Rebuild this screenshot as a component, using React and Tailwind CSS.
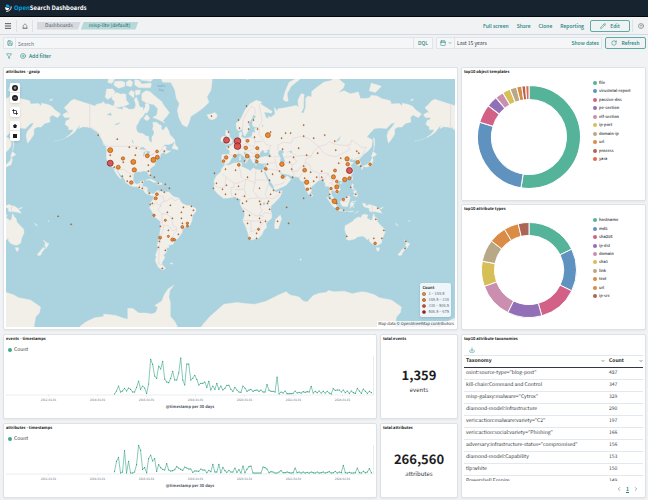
import React from 'react';
import {
    Calendar, ChevronDown, ChevronLeft, ChevronRight, CircleHelp, CirclePlus,
    Crop, Download, Filter, Menu, Pencil, RotateCw, Save,
} from 'lucide-react';

// [lon, lat] outlines, flattened in pairs
const LAND = [
    // North America
    [-168, 65.6, -164, 66.6, -162, 66.1, -163.5, 67.2, -166.5, 68.4, -163, 69.5, -160, 70.7, -156.7, 71.3, -152, 70.8, -146, 70.1, -141, 69.6, -136, 69, -134, 69.6, -129, 70, -127.5, 70.5, -125, 69.6, -123, 69.8, -119, 69.2, -115, 68.7, -114, 68.2, -110, 67.9, -108, 67.5, -108, 68.5, -105, 68.5, -102, 67.8, -98, 67.8, -96, 68.2, -95, 69.5, -96.5, 71.2, -94.5, 72, -92, 70, -92, 69.5, -90.5, 68.5, -88, 68.5, -87.5, 67.2, -85.5, 68.7, -85.5, 69.8, -82, 69.7, -81.5, 68.5, -82, 67.5, -84, 66.3, -86, 66.4, -87, 65.4, -91, 63.6, -92.5, 62, -94.5, 60.5, -94.5, 58.8, -92.5, 57, -88, 56.6, -85, 55.3, -82.3, 55.1, -82, 53, -80, 51.3, -78.8, 52.2, -79, 54.5, -76.7, 56.5, -77, 58, -78.3, 59, -77.5, 60.5, -78, 62.4, -74, 62.3, -71.5, 61.2, -69.5, 60.8, -69.5, 59, -67.5, 58.4, -65.5, 59.8, -64.5, 60.3, -62, 58, -61, 56, -59, 55, -57.5, 54, -56, 53, -56, 52, -59, 50.8, -62, 50.2, -66, 50.2, -68.5, 48.7, -70, 47.3, -67, 49, -64.5, 48.8, -65, 47.5, -64.5, 46.2, -61, 45.8, -60, 46, -61.5, 45.3, -65.5, 43.5, -66, 44.5, -64.8, 45.6, -67, 45, -70, 43.8, -70.7, 42.2, -70, 41.7, -73.5, 41, -74, 40, -75.5, 37.5, -76, 36.5, -76, 35, -78, 34, -80.8, 32.2, -81.4, 30.5, -80.2, 27, -80.5, 25.2, -81.8, 26, -82.7, 28, -84, 30, -86, 30.3, -89.5, 30.2, -89.3, 29.2, -91.5, 29.5, -94.7, 29.5, -97.2, 27.5, -97.5, 24.5, -97.5, 21.5, -96, 19, -94.3, 18.2, -92, 18.6, -90.6, 19.5, -90.3, 21, -87, 21.5, -87.5, 19.5, -88.2, 18, -88.8, 15.9, -86, 15.9, -83.3, 15, -83.7, 12, -83.5, 10.8, -82, 9.1, -79.5, 9.5, -77.3, 8.6, -78, 7.3, -80.2, 7.3, -81, 8, -83.5, 8.5, -85.7, 10, -87.5, 12.8, -91, 14, -94, 16.1, -96.5, 15.7, -99.8, 16.7, -102, 17.9, -105.5, 20, -105.4, 21.5, -107, 24, -109.3, 26, -112, 29, -113, 31.2, -114.7, 31.7, -112.8, 28.4, -111, 25.7, -109.5, 23.2, -110.3, 23.3, -112, 25, -114, 27.2, -115.8, 30, -117.2, 32.6, -118.5, 34, -120.6, 34.6, -122.5, 37.5, -124.2, 40.4, -124.2, 43, -124, 46.2, -124.7, 48.3, -122.7, 48.9, -127, 51, -130, 54.5, -133.5, 57.5, -136, 58.3, -140, 59.7, -144, 60, -148, 60.2, -151.5, 59.3, -150.5, 61.2, -153.5, 59.3, -156, 57.5, -160, 55.8, -164.5, 54.6, -161, 56, -158, 57.8, -157.5, 58.8, -162, 58.7, -162, 60, -165.5, 61.3, -164.5, 63, -161, 63.7, -161, 64.5, -166, 64.5],
    // Arctic islands
    [-61.5, 66.5, -64, 65, -68, 63, -66, 62, -72, 63.5, -78, 64.5, -74, 65.5, -73, 68, -77, 69.5, -84, 70, -89, 71, -89, 73, -85, 73.8, -81, 73.6, -78, 72.8, -74, 71.8, -69, 70.5, -67, 69.2],
    [-117, 69, -113, 68.5, -106, 69, -101.5, 69.7, -104.5, 71, -105, 72.8, -108, 73, -110, 72.8, -114, 73.3, -118, 72.6, -119, 71.5, -116, 70.5],
    [-125.5, 72, -123, 71.2, -119.5, 72, -115.5, 73.4, -118, 74.3, -124, 74.3],
    [-102, 73, -97, 71.7, -96.5, 73.5, -100, 73.9],
    [-95.5, 73.9, -95, 72.5, -91, 72.8, -90.5, 74],
    [-96, 75.3, -92, 74.7, -80.5, 74.6, -79.5, 75.4, -80, 75.8, -89, 75.6, -92, 76.5, -96, 76.6],
    [-80, 76.2, -86, 76.4, -90, 76.5, -90, 79, -74, 79, -77, 77],
    [-104.5, 75.2, -99.5, 74.9, -98, 76, -101, 76.6, -104.5, 76],
    [-117, 75.3, -112, 74.5, -106, 75, -106, 76, -110, 76.3, -116, 76.2],
    [-123, 76, -119, 75.7, -116, 76.8, -121, 77.5],
    [-87, 64.1, -84, 65.7, -81, 64, -84, 63],
    // Greenland
    [-73, 78.3, -68, 76, -60, 76, -56, 74, -54.5, 71.5, -51.5, 69.8, -53.5, 67.5, -52, 64.5, -48.5, 61.2, -44, 60, -42.5, 61.5, -40, 65, -34, 66.5, -27, 68.5, -22, 70.3, -24, 72, -20, 74, -19, 76, -18, 79, -60, 82],
    [-24, 65.6, -22, 64, -18.7, 63.4, -14.5, 64.4, -13.8, 65.5, -16, 66.5, -20, 65.9],
    [-59, 47.7, -53, 46.7, -53, 48.2, -55.5, 49.8, -56, 51.5],
    [-128, 50.8, -123.5, 48.4, -125, 49.8],
    [-85, 22, -80, 23.1, -75, 20.7, -74.5, 20.1, -77.5, 20, -81, 22],
    [-74.3, 18.4, -73, 19.9, -69, 19.2, -68.5, 18.3, -71.5, 17.8],
    // South America
    [-77.3, 8.6, -75, 11, -71.8, 12.4, -71.5, 10.5, -70, 12, -68, 10.6, -62, 10.7, -60, 8.5, -57, 6, -52, 4.8, -50, 1, -48.5, -.8, -44, -2.8, -40, -2.9, -37, -4.8, -35, -6, -34.9, -8.5, -38.5, -13, -39, -17.5, -41, -22, -45, -23.5, -48.5, -26, -49, -28.8, -53.5, -34, -57.5, -34.5, -56.7, -36.5, -58, -38.3, -62, -39, -62.2, -40.8, -65, -41, -63.8, -42.8, -65.5, -45, -67.5, -46.2, -66, -48, -69, -51, -68.5, -52.5, -65.2, -54.7, -68, -55.6, -72.5, -54, -75.5, -50, -74.5, -47, -75.5, -46.5, -73, -42, -73.5, -39, -71.5, -32, -70.3, -25, -70.3, -18.3, -76, -14, -79, -8.2, -81.3, -5, -80, -3, -81, -1, -80, .8, -77.5, 3.5],
    [-61, -51.5, -58, -51.3, -59, -52.2],
    // Africa
    [-6, 35.7, -2, 35.1, 3, 36.8, 10, 37.3, 11, 35.5, 10.2, 34, 15, 32.3, 19.5, 30.3, 22, 32.8, 25, 31.6, 29, 31, 32.5, 31.2, 34.5, 31.5, 34.9, 29.5, 32.6, 30, 34, 26.5, 37, 21, 37.3, 18.5, 39.5, 15.5, 43, 12, 44.5, 10.5, 51.2, 11.9, 49, 6, 44, .5, 40, -3, 39.3, -7, 40.6, -11, 40.6, -15, 35, -20, 35.5, -24, 32.7, -26.5, 31, -30, 27.5, -33.3, 20, -34.8, 18.3, -33.5, 17, -29, 14.5, -22.5, 11.8, -17.5, 13.7, -12, 13, -8.5, 9, -1, 9.6, 3.8, 6, 4.3, 4.5, 6.3, -2, 4.8, -7.5, 4.4, -13, 8.8, -16.8, 13, -17.4, 14.7, -16.2, 18.5, -17, 21.2, -14.5, 26, -10, 29.5, -9.5, 32],
    [49.2, -12.2, 50.4, -15.8, 47, -25, 44, -25, 43.4, -22, 44.5, -16.5],
    // Eurasia, running past the date line to Chukotka
    [-9, 43.2, -1.5, 43.4, -1.2, 46, -4.7, 48, -1.5, 48.7, 1.5, 50.2, 4, 51.8, 5, 53.3, 8.5, 53.9, 8.2, 57, 10.5, 57.7, 10.8, 56.2, 10, 54.5, 14, 54, 19, 54.4, 21, 55.5, 21.5, 57.3, 24.3, 57.2, 23.5, 59.2, 30, 59.9, 23, 60, 21.4, 61, 21.5, 63, 25.3, 65, 22, 65.6, 21, 64.3, 17.3, 61.5, 18.8, 59.8, 16.5, 57.5, 14.2, 55.5, 12.8, 55.6, 11.3, 59, 8, 58.1, 5.5, 59, 5, 61.8, 10, 64, 14, 67.5, 19, 69.8, 25.5, 71, 31, 70.3, 29, 69.8, 41, 67, 40.5, 66.3, 33, 66.7, 35, 64.3, 38, 64, 37, 65, 40, 64.6, 44, 66, 43.3, 68.5, 46, 67, 47, 68, 54, 68.3, 60, 68.8, 65, 69.2, 67.5, 68.5, 67, 69.8, 66.8, 71, 70, 73, 73, 72.8, 72.5, 70.5, 72.5, 68.5, 70, 66.4, 72.5, 66.3, 74.5, 68.5, 74.5, 71.5, 76.5, 72.3, 80.5, 72, 80.5, 73.6, 87, 75, 93, 76.1, 100, 76.4, 104.3, 77.7, 108, 76.7, 113.5, 75.6, 112, 74.5, 107, 73.3, 113, 73.8, 119, 73, 123.5, 73.2, 127, 73.5, 129, 71.5, 133, 71.5, 138, 71.7, 140, 72.5, 146, 72.3, 150, 71.5, 159, 70.8, 160, 69.7, 168, 69.9, 170.5, 69, 171, 70, 177, 69.5, 181, 68.9, 185, 67.3, 190, 66, 187, 64.4, 182, 65.5, 179, 64.7, 179.5, 62.5, 174, 61.8, 170.5, 60, 166.5, 60, 163.3, 59, 163.3, 56.2, 160, 53.3, 157, 51, 155.6, 55.5, 156.8, 57.8, 161.5, 60.5, 163.5, 62.3, 160, 61.7, 155, 59.3, 149, 59.6, 143, 59.3, 135.5, 54.8, 141, 53, 140.5, 49, 137, 46, 132, 43.2, 129.8, 41.3, 127.5, 39.7, 129.3, 37, 129, 35.2, 126.4, 34.5, 126.5, 37.5, 125, 38.2, 124.5, 40, 121.3, 39, 121.5, 40.7, 118, 39.1, 118.5, 37.8, 122.4, 37.2, 119.3, 35, 121.8, 31.7, 121.8, 29, 118.5, 24.7, 114, 22.4, 110, 21, 108, 21.6, 105.8, 19, 109.2, 13.5, 107, 10.3, 105, 8.7, 104.8, 10.3, 101, 12.7, 99.8, 11, 100.5, 7.3, 103.4, 3.5, 104, 1.4, 101.5, 2.8, 98.3, 8, 98.5, 13, 97.5, 16.5, 94.3, 16, 94, 19, 91.5, 22.5, 87, 21.5, 85, 19.6, 80.3, 15.7, 80, 11, 77.5, 8.1, 74.5, 14, 72.8, 19, 72.5, 21.3, 70, 21, 67.2, 25, 61.5, 25.2, 57, 27, 51, 28, 48, 30, 51, 25.5, 54, 24.2, 56.3, 26, 59.8, 22.5, 55, 17.3, 45, 12.8, 43.3, 13, 42.5, 16.5, 39, 21.5, 35, 28, 34.2, 31.3, 36, 36.6, 30.5, 36.5, 27.3, 37, 26.3, 39.5, 29, 41.1, 35, 42, 41, 41.3, 38.5, 44.5, 39, 47, 35, 46.3, 36.5, 45.2, 33.7, 44.4, 33, 46.1, 31, 46.5, 28.5, 44, 28, 42, 26, 40.8, 23, 40.2, 24, 38, 22.5, 36.5, 19.5, 40.5, 19, 42.2, 13.8, 45.5, 12.4, 44.5, 14, 42.5, 18.4, 40, 16.8, 40.2, 16, 38, 15.5, 40, 10.3, 43.5, 8.5, 44.3, 3.2, 43.2, -.5, 39.3, -2, 36.8, -5.7, 36.1, -9, 37.2, -9.4, 39],
    [-5.5, 50.2, 1, 51, 1.6, 52.8, -1.5, 55, -2, 57.5, -5, 58.5, -5.5, 56, -3, 54.2, -4.6, 53, -3, 51.4],
    [-10, 52, -6.3, 52.2, -6, 55, -8, 55.2, -10, 54],
    [8.3, 39, 9.6, 39.2, 9.3, 42.8, 8.5, 41.5], [12.4, 38, 15.5, 38.2, 15, 36.7], [23.5, 35.5, 26, 35.2, 25, 34.9], [32.5, 35, 34.4, 35.5, 33.5, 34.6],
    [10, 79, 14, 76.9, 17, 76.6, 21, 79],
    [52, 71.3, 54, 70.6, 57, 70.7, 56, 73, 60, 75, 68.5, 76.7, 66, 77, 58, 76, 54, 73.5],
    [138, 73.8, 144, 73.3, 150, 75, 140, 75.8], [178.8, 71, 182, 71.4, 181, 70.9],
    [142, 54, 143, 49, 142, 46, 143.3, 50, 143, 54], [140, 41.6, 141.8, 45.4, 145.3, 43.3, 143, 42],
    [130.8, 34, 135.8, 35.6, 139.5, 38.5, 141.3, 41.4, 141.8, 39, 140.5, 35.5, 135.7, 33.6], [130, 33.5, 131.8, 33.2, 130.5, 31.2],
    [120.2, 23, 121.7, 25.2, 120.9, 22], [108.7, 19.3, 110.8, 20, 109.5, 18.2], [79.8, 9.5, 81.8, 7.3, 80.3, 6],
    [120, 16, 121, 18.6, 122.2, 18, 121.5, 14.5, 124, 13, 120.7, 13.8], [122, 7.5, 125.5, 9.7, 126.5, 7.5, 125.2, 5.8], [122, 11.5, 125, 12.3, 125, 10.2, 123, 9.5],
    // Malay archipelago
    [95.3, 5.6, 98, 4.2, 103.5, -1, 106, -3.2, 105.7, -5.8, 102, -4], [105.3, -6.8, 108.5, -6.8, 114.4, -7.8, 114.3, -8.7, 108, -7.8],
    [109, 1.6, 111.5, 2.7, 115, 5.2, 117, 7, 119, 5.2, 117.7, 1, 116, -4, 111, -3.3, 109.2, 0],
    [119, -5.5, 119.5, 0, 121, 1.2, 125, 1.6, 120.5, .4, 123.3, -1, 121.5, -2, 122.7, -5, 120.8, -3],
    [131, -.8, 134, -.8, 135, -3.3, 138, -1.7, 144.5, -3.8, 147.8, -6, 150.6, -10.4, 147, -9.5, 143, -8.8, 141, -9.1, 138, -8.3, 138, -5.5, 132.8, -4],
    [148.5, -5.7, 152, -4.3, 150, -6.3], [116, -8.5, 122.5, -8.4, 119.5, -9], [123.6, -10.2, 127, -8.5, 125, -9.5],
    // Oceania
    [114, -22, 117, -20.6, 122, -18, 123, -16.5, 127, -14, 129.5, -15, 130.7, -12.4, 132.5, -11.3, 136.7, -12.2, 135.5, -14.8, 139.5, -17.5, 141, -16.5, 141.7, -12.5, 142.5, -10.8, 143.8, -14.3, 145.4, -15, 146.3, -18.8, 149.5, -22, 153, -25.3, 153.5, -28.5, 151, -33.5, 150, -37.3, 146.3, -39, 143.5, -38.7, 140, -37.5, 138, -35.5, 137.8, -33, 136, -34.8, 134, -32.7, 131, -31.4, 126, -32.3, 123.5, -33.9, 118, -35, 115, -34.2, 115.7, -31.5, 113.5, -26],
    [144.8, -40.8, 148.2, -40.9, 147.5, -43.3, 146, -43.4],
    [172.7, -34.5, 175.5, -36.8, 178.4, -37.8, 177, -39.5, 175.2, -41.6, 175, -39.8, 173.8, -39.3, 175, -37.8], [172.7, -40.6, 174.2, -41.5, 171, -44.5, 170.5, -46, 168.3, -46.6, 166.6, -45.9],
    [164, -20, 167, -22.3, 165, -21.6], [177.3, -17.6, 178.6, -18, 177.5, -18.3], [68.8, -48.8, 70.5, -49.2, 69, -49.7],
    // Antarctica
    [-152, -77.5, -150, -76.6, -144, -75.6, -136, -74.6, -127, -74.3, -127, -73.6, -115, -74, -108, -74.7, -103, -75, -103, -71.9, -98, -72, -92, -73.3, -85, -73.3, -79, -73.6, -75, -73.2, -73, -71.6, -76, -71, -69, -69.5, -67, -67.5, -63, -65, -57, -63.2, -61, -65.5, -62, -68, -60.5, -70, -60.5, -74.3, -56, -75.6, -52, -77.5, -32, -77.5, -27, -76, -21, -74.3, -12, -72, -7, -70.6, 6, -70, 14, -70.4, 24, -70.6, 35, -69.6, 41, -68.5, 48, -67.2, 55, -66, 59, -67.3, 68, -68, 72, -69.5, 76, -69.8, 82, -67.5, 88, -66.6, 95, -66.3, 97, -65.5, 103, -66, 113, -65.8, 121, -66.8, 130, -66, 136, -66.3, 143, -67.2, 148, -68.3, 160, -69.2, 170, -71.5, 169, -73.2, 165, -74.4, 164, -76, 163, -77.6],
];

const LAKES = [
    [48, 46, 51.5, 46.5, 53, 45, 51, 44, 52.5, 41, 54, 38, 51, 36.8, 49, 38, 49.5, 41, 47, 44],
    [-92, 46.8, -88, 48.6, -84.6, 46.6, -88, 46.8], [-87.8, 42, -87, 45.5, -85.2, 45.5, -86.3, 43, -87, 41.8], [-84.5, 45.8, -80.5, 45.5, -82.3, 43.3, -83.8, 44],
    [-83, 41.7, -79, 42.8, -80.5, 42.2], [-79.5, 43.4, -76.5, 44, -77, 43.4], [32, .3, 34, .3, 33.5, -2.2, 32, -2],
    [104, 51.5, 109.5, 55.3, 108, 53], [58.5, 45.5, 61, 46.3, 60, 44], [30.5, 60.5, 32.5, 61.3, 31.5, 60], [-117, 61.2, -110, 62.5, -113, 61.2], [-124, 65.5, -120, 66.5, -119, 65.3], [-99, 53.5, -97.5, 52, -97, 50.6, -98.5, 51.5],
];

const BORDERS = [
    [-141, 69.6, -141, 60.3, -137, 59, -130, 56],
    [-123, 49, -95, 49, -89, 48, -84.5, 46.5, -82.5, 43, -79, 43, -75, 45, -71, 45, -69, 47.3, -67, 45],
    [-117, 32.6, -111, 31.4, -106.5, 31.7, -103, 29, -100, 28, -97.3, 26], [-92, 14.6, -91, 17.8, -89, 17.8], [-89, 13.5, -86, 13.8, -83.3, 15],
    [-79, -3.5, -75, 0, -70, -3, -73, -7, -70.5, -9.5, -69, -11, -69, -17, -70, -18.3], [-72, 12, -72.5, 7.5, -67.5, 6, -67, 1.2, -70, -.2, -70, -4], [-67, 1.2, -64, 2, -60, 5, -56, 2, -51.5, 4],
    [-69, -11, -65, -11, -60, -14, -58, -20, -58, -22, -54.5, -24, -54, -27, -57.5, -30, -58, -34], [-69, -17, -68, -22, -67, -24, -70, -32, -71.5, -40, -72, -48, -72, -52, -68.5, -52.4], [-67, -22, -63, -22, -58, -27, -54.5, -25.5],
    [-8.7, 27.7, -5, 25, 3, 19, 8, 19.5, 15, 23, 24, 19.5, 24, 22, 25, 31.5], [9, 37, 8, 33, 9.5, 30, 10, 25, 12, 23.5], [-5, 25, -6, 15.5, -12, 15, -16, 16.5], [24, 22, 37, 22], [3, 19, 3, 15, 0, 15, 0, 11, 1, 6], [4, 13, 13, 13.5, 15, 23], [13, 13.5, 15, 8, 10, 6], [24, 19.5, 22, 12, 27, 5, 34, 4, 36, 5, 42, 4, 48, 8], [15, 2, 18, 4, 27, 5], [12, -5, 17, -8, 22, -11, 24, -13, 30, -13, 34, -9.5, 40, -11], [30, 4, 29, -4, 31, -8, 28, -12, 33, -14], [20, -18, 20, -28, 25, -26, 30, -22, 35, -16], [12, -17.3, 25, -18, 33, -17], [34, 0, 39, -4.5], [37, 18, 36, 14, 34, 8, 36, 5],
    [-7, 42, -7, 37.3], [-1.5, 43.3, 3, 42.4], [2.5, 51, 8, 49, 7.5, 47.5, 7, 44], [7, 53.3, 6, 50], [14.3, 54, 15, 51, 12, 50, 13.5, 48.5, 10, 47.5, 7.5, 47.5], [15, 51, 18.5, 49.5, 23, 49, 24, 52, 23.5, 54, 19.5, 54.4], [13.5, 46, 19, 46, 23, 48, 28, 48, 28, 45.3, 22.5, 44, 19, 45], [21, 42, 26.5, 41.5], [28, 69.5, 30, 66, 31, 63, 28, 60.6], [11.5, 59, 12, 63, 15, 66, 20.5, 69, 24, 68, 24, 65.8], [28, 59.5, 28, 56, 32, 53, 35, 50, 40, 49.5, 38, 47], [24, 52, 31, 52],
    [47, 46, 47, 50, 52, 51.5, 60, 51, 62, 54, 70, 55, 77, 54, 83, 51, 87.5, 49, 95, 50, 98, 52, 103, 50.5, 113, 49.5, 119, 50, 120.5, 53, 127, 50, 131, 48, 135, 48.5, 131, 43],
    [87.5, 49, 91, 45.5, 97, 42.7, 105, 41.7, 111, 44, 119, 47, 116, 49.8], [87.5, 49, 82, 45, 80, 42, 74, 39.5, 74.5, 37, 79, 35, 79, 32, 82, 30.3, 88, 28, 97, 28.3, 98, 25, 101, 21.5, 105, 23, 108, 21.6],
    [53, 41.5, 57, 41.5, 60, 42, 66, 38, 62, 35.5, 54, 37.5], [56, 45, 58.5, 45.5, 66, 42, 71, 42.5, 80, 42.3], [61, 35.5, 61, 30, 66, 30, 70, 34, 74.5, 37], [61.5, 25.2, 63, 27, 61, 30], [68, 24, 71, 28, 75, 32, 74, 35],
    [44, 40, 44.5, 37, 46, 33, 48, 30, 42, 31.5, 38, 32, 36, 29.5], [36, 36.5, 44, 37.2], [43, 17, 52, 19, 55, 23, 51.5, 24.3], [41.5, 41.5, 48.5, 41.8], [88, 27, 88.5, 22, 92, 24, 92, 21.5, 97, 28], [98, 19, 101, 20, 101, 17.5, 105, 17, 107.5, 14.5, 103, 14, 103, 11.5], [124.5, 40, 130, 42.5], [109.5, 1.5, 115, 1, 117.5, 4], [141, -2.7, 141, -9.1],
];

const MARKERS = {
    top: [[110, 164, 3], [226, 141, 3], [237, 142, 3.3], [237, 147, 3.3], [348.7, 171.3, 3]],
    mid: [[110, 151, 2.5], [133, 162.7, 2.5], [153, 160.7, 2.5], [267.3, 136, 2.5], [134, 170.7, 2.2], [118, 168, 2], [147, 156.7, 2], [157, 158, 2], [122.7, 159.3, 1.7], [131, 183.3, 1.8], [156.7, 152.3, 1.4], [225.7, 158.3, 1.8], [223, 162, 1.4], [281.3, 165, 2.3], [246.7, 157, 1.9], [256.7, 157, 2], [245.3, 148.7, 1.8], [247, 141.7, 1.5], [256.7, 149, 1.6], [256.3, 162.3, 1.3], [238.3, 165.7, 1.4], [234.3, 156.7, 1.4], [265.3, 169.7, 1.4], [282, 177.7, 1.6], [304, 171, 1.9], [306, 183, 2.2], [306.7, 190, 1.3], [346.3, 159.7, 2.2], [347, 165, 1.8], [357, 163, 1.8], [369.3, 165, 1.3], [334.3, 171.3, 1.5], [332.7, 177.7, 2.1], [344, 180.3, 2.2], [348.7, 179, 1.6], [336, 182.3, 1.3], [336, 187.7, 2.1], [336.3, 192.3, 1.3], [330.3, 189.3, 1.3], [155.3, 199, 1.6], [156.5, 195, 1.4], [153.7, 216, 1.2], [187, 224, 1.2], [182, 227.7, 1.5], [187, 226.7, 1.1], [159.7, 238.3, 1.5], [172, 240.3, 1.7], [174, 240.3, 1.2], [333.7, 202, 2.4], [342.7, 200.3, 1.2], [336.7, 209.3, 1.5], [374.3, 244, 1.3], [165, 221, 1.1], [168, 237, 1.1], [258, 230, 1.1], [249, 239, 1.1]],
    low: [[98, 136], [117, 140], [129, 148], [136, 149], [110, 156], [135, 156], [164, 152], [123, 163], [114, 168], [122, 177], [130, 177], [127, 182], [148, 166], [148, 172], [150, 176], [154, 178], [142, 183], [139, 188], [142, 189], [158, 184], [165, 185], [169, 189], [161, 191], [164, 193], [149, 194], [211, 117], [228, 133], [228, 148], [214, 174], [225, 170], [216, 184], [222, 190], [213, 189], [226, 186], [225, 195], [246, 107], [238, 121], [239, 129], [248, 123], [253, 121], [248, 130], [257, 130], [254, 138], [270, 133], [281, 139], [285, 134], [290, 134], [303, 126], [303, 137], [313, 139], [324, 136], [334, 142], [298, 149], [317, 154], [335, 151], [356, 152], [358, 154], [340, 159], [338, 164], [306, 156], [282, 150], [293, 158], [289, 163], [303, 167], [292, 178], [291, 170], [310, 173], [321, 172], [304, 179], [313, 182], [316, 178], [321, 178], [322, 181], [310, 189], [310, 196], [329, 195], [360, 167], [350, 188], [355, 195], [346, 198], [269, 157], [267, 165], [261, 172], [272, 175], [279, 172], [269, 181], [279, 193], [273, 191], [270, 195], [259, 189], [247, 178], [235, 171], [238, 187], [244, 197], [235, 195], [244, 162], [58, 217], [71, 225], [152, 204], [150, 205], [170, 206], [167, 213], [183, 208], [191, 207], [193, 211], [191, 216], [181, 213], [181, 219], [172, 219], [182, 224], [160, 227], [168, 231], [178, 235], [159, 242], [158, 248], [165, 251], [162, 269], [237, 200], [246, 202], [242, 204], [259, 202], [260, 205], [268, 202], [267, 204], [243, 212], [249, 216], [269, 210], [259, 219], [247, 224], [260, 223], [265, 222], [277, 222], [288, 224], [286, 208], [303, 199], [256, 234], [256, 239], [336, 204], [329, 199], [343, 211], [377, 209], [375, 220], [383, 231], [346, 237], [373, 239], [381, 239], [405, 242], [404, 249]],
};

const BUCKETS = [
    ['1 – 169.5', '#f0932b'],
    ['169.5 – 338', '#e67a22'],
    ['338 – 506.5', '#d8452b'],
    ['506.5 – 675', '#b0181f'],
];

const TEMPLATES = [
    ['file', 189, '#54b399'], ['virustotal-report', 97.7, '#6092c0'], ['passive-dns', 20.9, '#d36086'],
    ['pe-section', 12.4, '#9170b8'], ['elf-section', 9.4, '#ca8eae'], ['ip-port', 9, '#d6bf57'],
    ['domain-ip', 7.7, '#b9a888'], ['url', 5.8, '#da8b45'], ['process', 4.4, '#aa6556'], ['yara', 3.7, '#e7664c'],
];

const TYPES = [
    ['hostname', 64, '#54b399'], ['md5', 52, '#6092c0'], ['sha256', 48.4, '#d36086'],
    ['ip-dst', 42.2, '#9170b8'], ['domain', 43.3, '#ca8eae'], ['sha1', 30.8, '#d6bf57'],
    ['link', 27, '#b9a888'], ['text', 21.3, '#da8b45'], ['url', 17.9, '#da8b45'], ['ip-src', 13.1, '#aa6556'],
];

const EVENTS = [3, 12, 27, 9, 12, 20, 12, 21, 17, 9, 9, 23, 42, 17, 27, 21, 5, 33, 107, 92, 57, 50, 87, 78, 101, 48, 39, 37, 50, 71, 45, 45, 66, 111, 45, 30, 93, 93, 45, 50, 59, 47, 30, 35, 35, 39, 23, 41, 15, 27, 17, 35, 17, 27, 15, 20, 29, 29, 17, 11, 23, 15, 9, 8, 27, 21, 11, 15, 17, 11, 14, 15, 11, 15, 9, 9, 31, 14, 11, 11, 9, 54, 3, 9, 6, 12, 4, 4, 4, 5, 12, 6, 8, 6, 10, 8, 10, 9, 26, 6, 11, 7, 12, 6, 11, 6, 11, 6, 3, 19, 14, 15, 15, 9, 15, 7, 12, 5, 12, 7, 5, 20, 12, 5, 18, 11, 5, 11, 7];
const ATTRIBUTES = [7, 38, 50, 3, 6, 70, 3, 38, 3, 3, 6, 28, 86, 71, 14, 19, 4, 46, 57, 39, 46, 8, 28, 19, 14, 12, 31, 12, 9, 10, 13, 22, 18, 14, 11, 21, 18, 15, 15, 5, 9, 9, 8, 15, 12, 12, 4, 11, 7, 29, 6, 6, 29, 4, 20, 10, 5, 11, 6, 6, 18, 5, 13, 3, 24, 4, 14, 22, 24, 3, 3, 3, 3, 3, 21, 19, 15, 4, 7, 6, 3, 3, 6, 10, 4, 4, 6, 4, 3, 4, 18, 4, 6, 3, 6, 3, 5, 3, 6, 4, 3, 6, 3, 4, 6, 3, 5, 7, 3, 4, 8, 3, 6, 4, 26, 4, 3, 5, 3, 3, 4, 18, 4, 3, 8, 4, 6, 16, 4];

const TAXONOMIES = [
    ['osint:source-type="blog-post"', 487],
    ['kill-chain:Command and Control', 347],
    ['misp-galaxy:malware="Cytrox"', 329],
    ['diamond-model:Infrastructure', 290],
    ['veris:action:malware:variety="C2"', 197],
    ['veris:action:social:variety="Phishing"', 166],
    ['adversary:infrastructure-status="compromised"', 156],
    ['diamond-model:Capability', 153],
    ['tlp:white', 150],
    ['Powershell Empire', 149],
];

// Web mercator, one unit per degree of longitude
const toPath = (points, close = true) => {
    let d = '';
    for (let i = 0; i < points.length; i += 2) {
        const lat = (points[i + 1] * Math.PI) / 180;
        const x = 230.5 + points[i];
        const y = 203.5 - 57.3 * Math.log(Math.tan(Math.PI / 4 + lat / 2));
        d += `${i ? 'L' : 'M'}${x.toFixed(1)} ${y.toFixed(1)}`;
    }
    return close ? d + 'Z' : d;
};

const landPath = LAND.map(p => toPath(p)).join('');
const lakePath = LAKES.map(p => toPath(p)).join('');
const borderPath = BORDERS.map(p => toPath(p, false)).join('');

function Panel({ title, className = '', children }) {
    return (
        <section className={`flex flex-col min-w-0 rounded-xs border border-[#dde1e8] bg-white px-0.5 shadow-xs ${className}`}>
            <h2 className="mb-0.5 text-[4px] leading-[9px] font-bold text-[#1a1c21]">{title}</h2>
            {children}
        </section>
    );
}

function ZoomIcon({ d }) {
    return (
        <svg viewBox="0 0 16 16" className="size-1.5">
            <circle cx="8" cy="8" r="8" fill="#1a1c21" />
            <path d={d} stroke="#fff" strokeWidth="1.5" />
        </svg>
    );
}

function WorldMap() {
    return (
        <div className="relative mb-0.5">
            <svg viewBox="6 80 448 247" className="block w-full h-auto bg-[#aad3df]" role="img" aria-label="attributes - geoip">
                {[-360, 0, 360].map(shift => (
                    <g key={shift} transform={`translate(${shift} 0)`}>
                        <path d={landPath} fill="#f2efe9" stroke="#f2efe9" strokeWidth="0.4" strokeLinejoin="round" />
                        <path d={lakePath} fill="#aad3df" />
                        <path d={borderPath} fill="none" stroke="#d3c3d2" strokeWidth="0.4" />
                    </g>
                ))}
                <path d="M54 142l6 -1 7 -3 5 -4M414 142l6 -1 7 -3 5 -4" fill="none" stroke="#f2efe9" strokeWidth="0.5" strokeDasharray="1.5 1" />
                <text x="161" y="88" textAnchor="middle" fontSize="3" fill="#7d9fc4">Baffin</text>
                <text x="161" y="92" textAnchor="middle" fontSize="3" fill="#7d9fc4">Bay</text>
                {MARKERS.low.map(([x, y]) => (
                    <circle key={`${x}-${y}`} cx={x} cy={y} r="0.6" fill="#e0721f" stroke="#7a3a12" strokeWidth="0.4" />
                ))}
                {MARKERS.mid.map(([x, y, r]) => (
                    <circle key={`${x}-${y}`} cx={x} cy={y} r={r} fill="#e98a2c" stroke="#a3480f" strokeWidth="0.6" />
                ))}
                {MARKERS.top.map(([x, y, r]) => (
                    <circle key={`${x}-${y}`} cx={x} cy={y} r={r} fill="#cf4a4a" fillOpacity="0.9" stroke="#8a1518" strokeWidth="0.7" />
                ))}
            </svg>
            <div className="absolute top-1 left-1 flex flex-col gap-1 text-[#1a1c21]">
                <div className="flex flex-col rounded-xs bg-white shadow-sm">
                    <button aria-label="Zoom in" className="flex size-2.5 items-center justify-center border-b border-gray-200"><ZoomIcon d="M4 8h8M8 4v8" /></button>
                    <button aria-label="Zoom out" className="flex size-2.5 items-center justify-center"><ZoomIcon d="M4 8h8" /></button>
                </div>
                <button aria-label="Fit to data" className="flex size-2.5 items-center justify-center rounded-xs bg-white shadow-sm"><Crop className="size-1.5" strokeWidth={3} /></button>
                <div className="flex flex-col rounded-xs bg-white shadow-sm">
                    <button aria-label="Draw polygon" className="flex size-2.5 items-center justify-center border-b border-gray-200">
                        <svg viewBox="0 0 10 10" className="size-1"><path d="M5 0L10 4L8 10H2L0 4Z" fill="currentColor" /></svg>
                    </button>
                    <button aria-label="Draw rectangle" className="flex size-2.5 items-center justify-center"><span className="size-1 bg-[#1a1c21]" /></button>
                </div>
            </div>
            <div className="absolute right-1 bottom-2.5 rounded-xs bg-white/80 px-0.5 py-0.5 text-[4px] leading-[6px] text-[#69707d] shadow-sm">
                <div className="font-bold text-[#343741]">Count</div>
                {BUCKETS.map(([label, color]) => (
                    <div key={label} className="flex items-center gap-0.5">
                        <svg viewBox="0 0 8 8" className="size-1"><circle cx="4" cy="4" r="3.2" fill={color} stroke="#7a3a12" /></svg>
                        {label}
                    </div>
                ))}
            </div>
            <div className="absolute right-0 bottom-0 bg-white/80 px-px text-[4px] leading-[6px] text-[#333]">Map data © OpenStreetMap contributors</div>
        </div>
    );
}

function Donut({ data, inner, label, className }) {
    const total = data.reduce((sum, d) => sum + d[1], 0);
    const at = (angle, r) => `${50 + r * Math.sin(angle)} ${50 - r * Math.cos(angle)}`;
    let start = 0;
    return (
        <svg viewBox="0 0 100 100" className={className} role="img" aria-label={label}>
            {data.map(([name, value, color]) => {
                const from = start;
                const to = start + (value / total) * Math.PI * 2;
                start = to;
                const large = to - from > Math.PI ? 1 : 0;
                return (
                    <path
                        key={name}
                        d={`M${at(from, 49.5)}A49.5 49.5 0 ${large} 1 ${at(to, 49.5)}L${at(to, inner)}A${inner} ${inner} 0 ${large} 0 ${at(from, inner)}Z`}
                        fill={color}
                        stroke="#fff"
                        strokeWidth="1"
                    />
                );
            })}
        </svg>
    );
}

function DonutBody({ data, inner, label, className }) {
    return (
        <div className="grid grid-cols-[129fr_50fr] items-start">
            <div className="flex justify-center pt-1.5"><Donut data={data} inner={inner} label={label} className={className} /></div>
            <ul className="flex h-21 flex-col justify-between text-[4px] leading-[8px] font-medium text-[#343741]">
                {data.map(([name, , color]) => (
                    <li key={name} className="flex items-center gap-0.5 whitespace-nowrap">
                        <svg viewBox="0 0 8 8" className="size-1"><circle cx="4" cy="4" r="4" fill={color} /></svg>
                        {name}
                    </li>
                ))}
            </ul>
        </div>
    );
}

function TimeChart({ values, height, label }) {
    const points = values.map((v, i) => [108.5 + i * 2.007, height - v / 3]);
    return (
        <>
            <div className="flex items-center gap-0.5 px-0.5 text-[5px] leading-[8px] text-[#343741]">
                <svg viewBox="0 0 8 8" className="size-1"><circle cx="4" cy="4" r="4" fill="#3fa888" /></svg>
                Count
            </div>
            <svg viewBox={`0 0 368 ${height + 9}`} className="block w-full h-auto" role="img" aria-label={label}>
                <path d={`M0.5 ${height + 1}V${height}H367.5V2`} fill="none" stroke="#dde1e8" strokeWidth="0.6" />
                <polyline points={points.map(p => p.join(',')).join(' ')} fill="none" stroke="#54b399" strokeWidth="0.7" />
                {points.map(([x, y]) => <circle key={x} cx={x} cy={y} r="0.6" fill="#2f9c79" />)}
                {[2012, 2014, 2016, 2018, 2020, 2022, 2024].map((year, i) => (
                    <g key={year}>
                        <path d={`M${42.5 + i * 49} ${height}v1.5`} stroke="#cfd5de" strokeWidth="0.5" />
                        <text x={42.5 + i * 49} y={height + 6} textAnchor="middle" fontSize="3" fill="#69707d">{year}-01-01</text>
                    </g>
                ))}
            </svg>
            <div className="text-center text-[4px] leading-[6px] font-bold text-[#535966]">@timestamp per 30 days</div>
        </>
    );
}

function Metric({ value, label }) {
    return (
        <div className="flex flex-1 flex-col items-center justify-center pb-1 text-[#1a1c21]">
            <div className="text-[13px] leading-[20px] font-bold">{value}</div>
            <div className="text-[6px] leading-[9px] text-[#343741]">{label}</div>
        </div>
    );
}

function TopNav() {
    return (
        <>
            <header className="flex h-[17px] items-center gap-0.5 border-b border-[#03080f] bg-[#172430] px-1 text-[6px] leading-[8px] font-bold text-white">
                <svg viewBox="0 0 16 16" className="size-2 shrink-0">
                    <path d="M14.5 5.5C14.5 11 10.5 14.8 5 14.8" fill="none" stroke="#fff" strokeWidth="1.8" strokeLinecap="round" />
                    <path d="M1.5 7c2 3 1.2 5.4 4.8 5.4 2.6 0 4-2.2 4-4.6C8 9 7 6.500 3.500 6.500z" fill="#fff" />
                    <path d="M11 8c1-4-1-7-5.500-7C3.500 1 3 4 5 5.500 7 7 9.500 6 11 8z" fill="#00a3e0" />
                </svg>
                <span><span className="text-[#00a3e0]">Open</span>Search Dashboards</span>
            </header>
            <nav className="flex h-[18px] items-center border-b border-[#d3dae6] text-[5px] leading-[8px] text-[#1d837e]">
                <button aria-label="Menu" className="flex h-3 w-[17px] items-center justify-center border-r border-[#dde1e8] text-[#343741]"><Menu className="size-2" strokeWidth={2.5} /></button>
                <a href="#home" aria-label="Home" className="flex h-3 w-4 items-center justify-center border-r border-[#dde1e8] text-[#535966]">
                    <svg viewBox="0 0 16 16" className="size-1.5" fill="none" stroke="currentColor" strokeWidth="1.5" strokeLinejoin="round"><path d="M3 7.500L8 2l5 5.500V14H3zM1 14h14" /></svg>
                </a>
                <a href="#dashboards" className="ml-1 bg-[#d6dade] px-2 text-[#535966] [clip-path:polygon(0_0,100%_0,calc(100%-3px)_100%,0_100%)]">Dashboards</a>
                <span className="bg-[#b5d9d9] px-2 text-[#2b5e60] [clip-path:polygon(3px_0,100%_0,calc(100%-3px)_100%,0_100%)]">misp-lite (default)</span>
                <div className="ml-auto flex items-center gap-2 font-medium">
                    <button>Full screen</button>
                    <button>Share</button>
                    <button>Clone</button>
                    <button>Reporting</button>
                </div>
                <button className="ml-1.5 flex h-3 w-10 items-center justify-center gap-1 rounded-xs border border-[#5fa9a6] font-medium"><Pencil className="size-1.5" />Edit</button>
                <button aria-label="Help" className="ml-0.5 flex h-3 w-4 items-center justify-center border-l border-[#dde1e8] text-[#535966]"><CircleHelp className="size-1.5" /></button>
            </nav>
        </>
    );
}

function QueryBar() {
    return (
        <div className="pr-0.5 pl-[3px] text-[5px] leading-[8px] text-[#1d837e]">
            <div className="grid grid-cols-[430fr_166fr_41px] gap-[3px] pt-0.5">
                <div className="flex h-3 min-w-0 items-center border border-[#e0e5ea] bg-[#f4f6f7]">
                    <button aria-label="Saved queries" className="flex h-full w-3 items-center justify-center border-r border-[#e0e5ea]"><Save className="size-1.5" /></button>
                    <input type="text" aria-label="Search" placeholder="Search" className="h-full min-w-0 flex-1 px-0.5 placeholder:text-[#69707d] outline-none" />
                    <button className="h-full border-l border-[#e0e5ea] px-1 font-medium">DQL</button>
                </div>
                <div className="flex h-3 min-w-0 items-center border border-[#e0e5ea] bg-[#f4f6f7]">
                    <button aria-label="Quick dates" className="flex h-full w-4.5 items-center justify-center gap-0.5 border-r border-[#e0e5ea]"><Calendar className="size-1.5" /><ChevronDown className="size-1" strokeWidth={3} /></button>
                    <button className="flex-1 px-0.5 text-left text-[#343741]">Last 15 years</button>
                    <button className="px-0.5 font-medium">Show dates</button>
                </div>
                <button className="flex h-3 items-center justify-center gap-1 rounded-xs border border-[#5fa9a6] font-medium"><RotateCw className="size-1.5" />Refresh</button>
            </div>
            <div className="flex h-[14px] items-center gap-2 px-[3px] font-medium">
                <button aria-label="Filters"><Filter className="size-1.5" /></button>
                <button className="flex items-center gap-[3px]"><CirclePlus className="size-1.5" />Add filter</button>
            </div>
        </div>
    );
}

function TaxonomyTable() {
    return (
        <>
            <button aria-label="Export" className="ml-1 flex h-2 w-2 items-center justify-center text-[#1d837e]"><Download className="size-1.5" /></button>
            <div className="mt-px h-[126px] overflow-hidden">
                <table className="w-full table-fixed border-collapse text-left text-[5px] leading-[8px] text-[#343741]">
                    <thead>
                        <tr className="h-3 border-t border-b border-t-[#e3e7ee] border-b-[#343741] text-[#1a1c21]">
                            <th className="pl-0.5"><span className="flex items-center justify-between pr-0.5">Taxonomy<ChevronDown className="size-1" strokeWidth={3} /></span></th>
                            <th className="w-9 pl-0.5"><span className="flex items-center justify-between">Count<ChevronDown className="size-1" strokeWidth={3} /></span></th>
                        </tr>
                    </thead>
                    <tbody>
                        {TAXONOMIES.map(([name, count]) => (
                            <tr key={name} className="h-3 border-b border-[#e3e7ee]">
                                <td className="pl-0.5 whitespace-nowrap">{name}</td>
                                <td className="pl-0.5">{count}</td>
                            </tr>
                        ))}
                    </tbody>
                </table>
            </div>
            <div className="flex flex-1 items-center justify-end gap-1 pr-1 text-[5px] leading-[8px] text-[#535966]">
                <button aria-label="Previous page"><ChevronLeft className="size-1.5" /></button>
                <button className="font-bold text-[#1d837e] underline">1</button>
                <button aria-label="Next page"><ChevronRight className="size-1.5" /></button>
            </div>
        </>
    );
}

export default function App() {
    return (
        <div className="min-h-screen bg-[#f0f2f4] font-['Noto_Sans_CJK_JP','Noto_Sans',sans-serif] [text-rendering:geometricPrecision]">
            <TopNav />
            <QueryBar />
            <main className="flex flex-col gap-1 pt-1 pr-0.5 pb-[3px] pl-[3px]">
                <div className="grid grid-cols-[455fr_185fr] gap-[3px]">
                    <Panel title="attributes - geoip">
                        <WorldMap />
                    </Panel>
                    <div className="grid min-w-0 grid-rows-[134fr_125fr] gap-[3px]">
                        <Panel title="top10 object templates">
                            <DonutBody data={TEMPLATES} inner={36} label="top10 object templates" className="w-26" />
                        </Panel>
                        <Panel title="top10 attribute types">
                            <DonutBody data={TYPES} inner={36} label="top10 attribute types" className="w-24" />
                        </Panel>
                    </div>
                </div>
                <div className="grid grid-cols-[455fr_185fr] gap-[3px]">
                    <div className="flex min-w-0 flex-col gap-1">
                        <div className="grid grid-cols-[374fr_78fr] gap-[3px]">
                            <Panel title="events - timestamps" className="pb-2"><TimeChart values={EVENTS} height={41} label="events per 30 days" /></Panel>
                            <Panel title="total events"><Metric value="1,359" label="events" /></Panel>
                        </div>
                        <div className="grid grid-cols-[374fr_78fr] gap-[3px]">
                            <Panel title="attributes - timestamps" className="pb-2"><TimeChart values={ATTRIBUTES} height={31} label="attributes per 30 days" /></Panel>
                            <Panel title="total attributes"><Metric value="266,560" label="attributes" /></Panel>
                        </div>
                    </div>
                    <Panel title="top10 attribute taxonomies">
                        <TaxonomyTable />
                    </Panel>
                </div>
            </main>
        </div>
    );
}
